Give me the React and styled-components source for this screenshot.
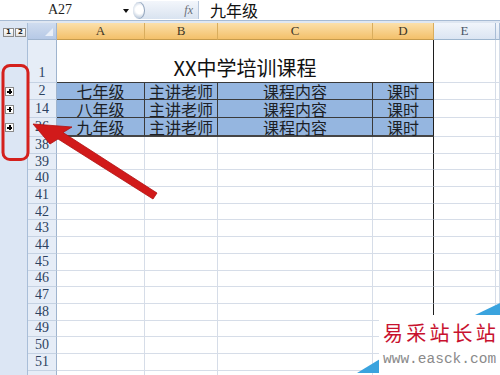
import React from "react";
import styled, { createGlobalStyle, css } from "styled-components";

const GlobalStyle = createGlobalStyle`
  html, body { margin: 0; padding: 0; background: #fff; }
  body { overflow: hidden; }
  * { box-sizing: border-box; }
`;

const CJK = `"Noto Sans CJK SC", "Noto Sans", sans-serif`;
const SERIF = `"Liberation Serif", "Noto Sans CJK SC", serif`;
const COLS = "28px 29px 88px 73px 155px 61px 62px 1fr";

const Screen = styled.div`
  position: relative;
  width: 500px;
  height: 375px;
  overflow: hidden;
  background: #fff;
`;

/* ---------- formula bar ---------- */
const FormulaBar = styled.div`
  display: flex;
  height: 21px;
  background: #fff;
  border-bottom: 1px solid #a7bbd4;
`;
const NameBox = styled.div`
  width: 118px;
  display: flex;
  align-items: center;
  justify-content: center;
  font-family: ${SERIF};
  font-size: 14px;
  line-height: 20px;
  color: #1e1e1e;
  padding-left: 2px;
`;
const DropBtn = styled.div`
  width: 15px;
  display: flex;
  align-items: center;
  justify-content: center;
  &::after {
    content: "";
    border-left: 3px solid transparent;
    border-right: 3px solid transparent;
    border-top: 4px solid #111;
    margin-top: 1px;
  }
`;
const FxArea = styled.div`
  width: 66px;
  margin: 1px 0;
  display: flex;
  align-items: center;
  justify-content: space-between;
  background: linear-gradient(#f3f6fb, #d9e3f0);
  border-radius: 9px 0 0 9px;
  border-right: 1px solid #b7c7dc;
`;
const Grip = styled.div`
  width: 12px;
  height: 17px;
  border-radius: 50%;
  background: radial-gradient(circle at 55% 45%, #ffffff 0 35%, #c5d1e0 70%, #9fb0c6 100%);
  box-shadow: inset -1px 0 0 #8fa2bb;
`;
const Fx = styled.span`
  font-family: ${SERIF};
  font-style: italic;
  font-size: 12px;
  line-height: 14px;
  color: #6a6f78;
  margin-right: 5px;
`;
const FormulaText = styled.div`
  padding-left: 11px;
  display: flex;
  align-items: center;
  font-family: ${CJK};
  font-size: 16px;
  line-height: 20px;
  color: #111;
`;
const Strip = styled.div`
  height: 2px;
  background: #dfe7f2;
`;

/* ---------- sheet ---------- */
const Row = styled.div`
  display: grid;
  grid-template-columns: ${COLS};
  height: ${(p) => p.$h}px;
`;
const Gutter = styled.div`
  background: #dce6f4;
  border-right: 1px solid #a9bed8;
  display: flex;
  align-items: ${(p) => (p.$head ? "flex-end" : "center")};
  padding-left: ${(p) => (p.$head ? 3 : 5)}px;
  padding-bottom: ${(p) => (p.$head ? 3 : 0)}px;
  gap: 1px;
`;
const LevelBtn = styled.div`
  width: 11px;
  height: 9px;
  border: 1px solid #8c8c8c;
  background: linear-gradient(#ffffff, #e4e4e4);
  font-family: "DejaVu Sans", sans-serif;
  font-weight: bold;
  font-size: 7px;
  line-height: 7px;
  text-align: center;
  color: #222;
`;
const PlusBtn = styled.div`
  width: 9px;
  height: 9px;
  border: 1px solid #8a8a8a;
  background: #fff;
  position: relative;
  &::before, &::after {
    content: "";
    position: absolute;
    background: #000;
  }
  &::before { left: 1px; right: 1px; top: 3px; height: 1.5px; }
  &::after { top: 1px; bottom: 1px; left: 3px; width: 1.5px; }
`;
const Corner = styled.div`
  position: relative;
  background: linear-gradient(#cfdcef, #b6c9e6);
  border-right: 1px solid #9fb4ce;
  border-bottom: 1px solid #9fb4ce;
  &::after {
    content: "";
    position: absolute;
    right: 3px;
    bottom: 3px;
    border-left: 8px solid transparent;
    border-bottom: 8px solid #e9eff8;
  }
`;
const ColHead = styled.div`
  display: flex;
  align-items: center;
  justify-content: center;
  font-family: ${SERIF};
  font-size: 13px;
  line-height: 14px;
  ${(p) =>
    p.$sel
      ? css`
          background: linear-gradient(#fbe0ab, #f3c06a);
          border-right: 1px solid #d9ad5d;
          border-bottom: 1px solid #c79b4c;
          color: #403626;
        `
      : css`
          background: linear-gradient(#f1f5fb, #dbe5f2);
          border-right: 1px solid #a9bdd6;
          border-bottom: 1px solid #9eb6ce;
          color: #4a5566;
        `}
`;
const RowHead = styled.div`
  display: flex;
  justify-content: center;
  align-items: ${(p) => (p.$bottom ? "flex-end" : "center")};
  padding-bottom: ${(p) => (p.$bottom ? 2 : 0)}px;
  background: #e6edf7;
  border-right: 1px solid #9fb4ce;
  border-bottom: 1px solid #c5d2e3;
  font-family: ${SERIF};
  font-size: 14px;
  color: #2d4260;
  line-height: 1;
`;
const Cell = styled.div`
  border-right: 1px solid ${(p) => (p.$edge ? "#1e1e1e" : "#d6dde8")};
  border-bottom: 1px solid #d6dde8;
`;
const TitleCell = styled.div`
  grid-column: span 4;
  display: flex;
  align-items: flex-end;
  justify-content: center;
  padding-bottom: 1px;
  border-right: 1px solid #1e1e1e;
  border-bottom: 1px solid #3a3a3a;
  font-family: ${CJK};
  font-size: 20px;
  line-height: 26px;
  color: #111;
`;
const DataCell = styled.div`
  display: flex;
  align-items: center;
  justify-content: center;
  background: #95b6e0;
  border-right: 1px solid ${(p) => (p.$edge ? "#1e1e1e" : "#3a3a3a")};
  border-bottom: ${(p) => (p.$last ? "2px solid #454545" : "1px solid #3a3a3a")};
  font-family: ${CJK};
  font-size: 16px;
  line-height: 16px;
  color: #1c1f26;
  white-space: nowrap;
`;

/* ---------- overlays ---------- */
const Annotation = styled.svg`
  position: absolute;
  left: 0;
  top: 0;
  pointer-events: none;
`;
const Watermark = styled.div`
  position: absolute;
  left: 357px;
  top: 303px;
  width: 143px;
  height: 72px;
`;
const WmPanel = styled.div`
  position: absolute;
  left: 22px;
  top: 12px;
  right: 0;
  bottom: 0;
  background: #fff;
  display: flex;
  flex-direction: column;
  align-items: flex-start;
  padding: 5px 0 0 4px;
`;
const WmTitle = styled.div`
  font-family: ${CJK};
  font-size: 20px;
  line-height: 26px;
  letter-spacing: 3.2px;
  color: #c8112e;
`;
const WmUrl = styled.div`
  margin-top: 5px;
  font-family: "Liberation Mono", monospace;
  font-size: 14.5px;
  line-height: 16px;
  color: #8a8a8a;
`;
const WmTri = styled.svg`
  position: absolute;
  left: 0;
  top: 0;
`;

const dataRows = [
  { n: 2, h: 17, g: "七年级" },
  { n: 14, h: 18, g: "八年级" },
  { n: 26, h: 19, g: "九年级", last: true },
];
const emptyRows = Array.from({ length: 15 }, (_, i) => 38 + i);

export default function App() {
  return (
    <Screen>
      <GlobalStyle />
      <FormulaBar>
        <NameBox>A27</NameBox>
        <DropBtn />
        <FxArea>
          <Grip />
          <Fx>fx</Fx>
        </FxArea>
        <FormulaText>九年级</FormulaText>
      </FormulaBar>
      <Strip />

      <Row $h={17}>
        <Gutter $head>
          <LevelBtn>1</LevelBtn>
          <LevelBtn>2</LevelBtn>
        </Gutter>
        <Corner />
        {["A", "B", "C", "D"].map((c) => (
          <ColHead key={c} $sel>
            {c}
          </ColHead>
        ))}
        <ColHead>E</ColHead>
        <ColHead />
      </Row>

      <Row $h={43}>
        <Gutter />
        <RowHead $bottom>1</RowHead>
        <TitleCell>XX中学培训课程</TitleCell>
        <Cell />
        <Cell />
      </Row>

      {dataRows.map((r) => (
        <Row key={r.n} $h={r.h}>
          <Gutter>
            <PlusBtn />
          </Gutter>
          <RowHead>{r.n}</RowHead>
          <DataCell $last={r.last}>{r.g}</DataCell>
          <DataCell $last={r.last}>主讲老师</DataCell>
          <DataCell $last={r.last}>课程内容</DataCell>
          <DataCell $last={r.last} $edge>
            课时
          </DataCell>
          <Cell />
          <Cell />
        </Row>
      ))}

      {emptyRows.map((n) => (
        <Row key={n} $h={16.7}>
          <Gutter />
          <RowHead>{n < 52 ? n : ""}</RowHead>
          <Cell />
          <Cell />
          <Cell />
          <Cell $edge />
          <Cell />
          <Cell />
        </Row>
      ))}

      <Annotation width="500" height="375" viewBox="0 0 500 375">
        <rect x="3" y="65.5" width="25" height="94" rx="7" fill="none" stroke="#d4201c" strokeWidth="3" />
        <polygon
          points="33,124 72,127 63,132.5 157,193 153,199 58,139 50,144"
          fill="#d11a1a"
          stroke="#b01010"
          strokeWidth="0.8"
          strokeLinejoin="round"
        />
      </Annotation>

      <Watermark>
        <WmTri width="143" height="72" viewBox="0 0 143 72">
          <polygon points="118,12 143,0 143,12" fill="#3aa3de" />
          <polygon points="0,70 23,56 23,70" fill="#3aa3de" />
        </WmTri>
        <WmPanel>
          <WmTitle>易采站长站</WmTitle>
          <WmUrl>www.easck.com</WmUrl>
        </WmPanel>
      </Watermark>
    </Screen>
  );
}
